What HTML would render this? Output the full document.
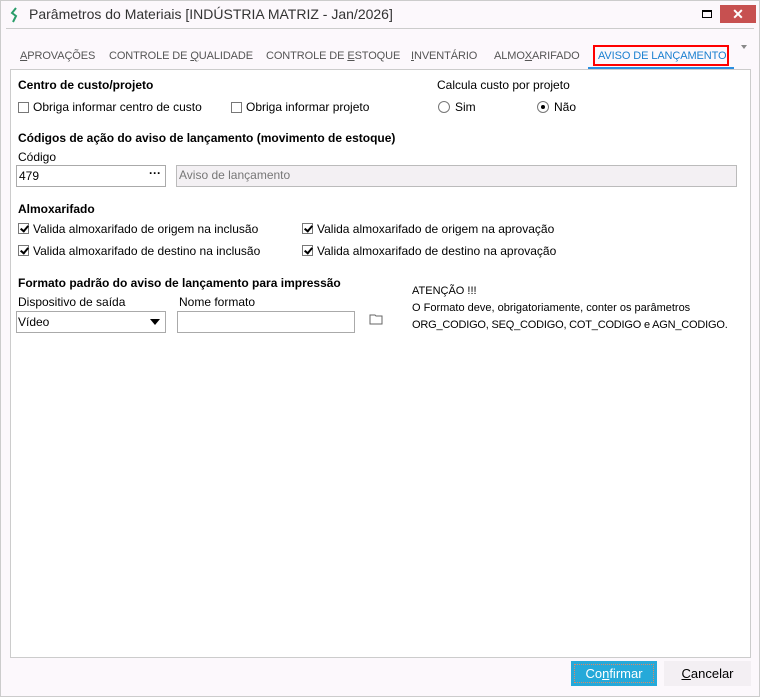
<!DOCTYPE html>
<html><head><meta charset="utf-8"><style>
*{margin:0;padding:0;box-sizing:border-box}
body{width:760px;height:697px;background:#fcf8fc;font-family:"Liberation Sans",sans-serif;font-size:12px;color:#000;position:relative;overflow:hidden}
.a{position:absolute;white-space:nowrap}
.b{font-weight:bold}
.cb{position:absolute;width:11px;height:11px;border:1px solid #777;background:#fff}
.cb.k::after{content:"";position:absolute;left:3px;top:0px;width:3px;height:6px;border:solid #000;border-width:0 2px 2px 0;transform:rotate(40deg)}
.rd{position:absolute;width:12px;height:12px;border:1px solid #777;border-radius:50%;background:#fff}
.tab{position:absolute;top:50px;color:#555;font-size:11px;letter-spacing:-0.1px}
.inp{position:absolute;border:1px solid #aaa;background:#fff;height:22px}
</style></head><body>
<div style="position:absolute;left:0;top:0;width:760px;height:697px;border:1px solid #ccc"></div>
<svg class="a" style="left:10px;top:7px" width="10" height="16" viewBox="0 0 10 16"><path d="M6 1 L2 6 L6 9 L3 15" fill="none" stroke="#2a9d6a" stroke-width="2"/></svg>
<div class="a" style="left:29px;top:6px;font-size:14px;color:#333">Parâmetros do Materiais [INDÚSTRIA MATRIZ - Jan/2026]</div>
<div class="a" style="left:702px;top:10px;width:10px;height:8px;border:1px solid #000;border-top-width:2px"></div>
<div class="a" style="left:720px;top:5px;width:36px;height:18px;background:#c75050;color:#fff;text-align:center;font-size:14px;line-height:18px;font-weight:bold">✕</div>
<div class="a" style="left:6px;top:28px;width:748px;height:1px;background:#ccc"></div>
<div class="tab" style="left:20px"><u>A</u>PROVAÇÕES</div>
<div class="tab" style="left:109px">CONTROLE DE <u>Q</u>UALIDADE</div>
<div class="tab" style="left:266px">CONTROLE DE <u>E</u>STOQUE</div>
<div class="tab" style="left:411px"><u>I</u>NVENTÁRIO</div>
<div class="tab" style="left:494px">ALMO<u>X</u>ARIFADO</div>
<div class="a" style="left:593px;top:45px;width:136px;height:21px;border:2px solid #f00"></div>
<div class="tab" style="left:598px;color:#1a7fd0">AVISO DE LANÇAMENTO</div>
<div class="a" style="left:588px;top:67px;width:146px;height:2px;background:#2b8fe0"></div>
<div class="a" style="left:741px;top:45px;width:0;height:0;border:3px solid transparent;border-top:4px solid #888"></div>
<div class="a" style="left:10px;top:69px;width:741px;height:589px;border:1px solid #ccc;background:#fff"></div>
<div class="a b" style="left:18px;top:78px">Centro de custo/projeto</div>
<div class="cb" style="left:18px;top:102px"></div><div class="a" style="left:33px;top:100px">Obriga informar centro de custo</div>
<div class="cb" style="left:231px;top:102px"></div><div class="a" style="left:246px;top:100px">Obriga informar projeto</div>
<div class="a" style="left:437px;top:78px">Calcula custo por projeto</div>
<div class="rd" style="left:438px;top:101px"></div><div class="a" style="left:455px;top:100px">Sim</div>
<div class="rd" style="left:537px;top:101px"><div style="position:absolute;left:3px;top:3px;width:4px;height:4px;border-radius:50%;background:#000"></div></div><div class="a" style="left:554px;top:100px">Não</div>
<div class="a b" style="left:18px;top:131px">Códigos de ação do aviso de lançamento (movimento de estoque)</div>
<div class="a" style="left:18px;top:150px">Código</div>
<div class="inp" style="left:16px;top:165px;width:150px"></div>
<div class="a" style="left:19px;top:169px">479</div>
<div class="a b" style="left:149px;top:166px">···</div>
<div class="inp" style="left:176px;top:165px;width:561px;background:#f3f0f3;border-color:#bbb"></div>
<div class="a" style="left:179px;top:168px;color:#777">Aviso de lançamento</div>
<div class="a b" style="left:18px;top:202px">Almoxarifado</div>
<div class="cb k" style="left:18px;top:223px"></div><div class="a" style="left:33px;top:222px">Valida almoxarifado de origem na inclusão</div>
<div class="cb k" style="left:302px;top:223px"></div><div class="a" style="left:317px;top:222px">Valida almoxarifado de origem na aprovação</div>
<div class="cb k" style="left:18px;top:245px"></div><div class="a" style="left:33px;top:244px">Valida almoxarifado de destino na inclusão</div>
<div class="cb k" style="left:302px;top:245px"></div><div class="a" style="left:317px;top:244px">Valida almoxarifado de destino na aprovação</div>
<div class="a b" style="left:18px;top:276px">Formato padrão do aviso de lançamento para impressão</div>
<div class="a" style="left:18px;top:295px">Dispositivo de saída</div>
<div class="a" style="left:179px;top:295px">Nome formato</div>
<div class="inp" style="left:16px;top:311px;width:150px"></div>
<div class="a" style="left:18px;top:315px">Vídeo</div>
<div class="a" style="left:150px;top:319px;border:5px solid transparent;border-top:6px solid #000;border-bottom:0"></div>
<div class="inp" style="left:177px;top:311px;width:178px"></div>
<svg class="a" style="left:369px;top:313px" width="16" height="13" viewBox="0 0 16 13"><path d="M1 2 H6 L7 3 H13 V11 H1 Z" fill="#fff" stroke="#666"/></svg>
<div class="a" style="left:412px;top:285px;font-size:11px">ATENÇÃO !!!</div>
<div class="a" style="left:412px;top:302px;font-size:11px">O Formato deve, obrigatoriamente, conter os parâmetros</div>
<div class="a" style="left:412px;top:319px;font-size:11px;letter-spacing:-0.2px">ORG_CODIGO, SEQ_CODIGO, COT_CODIGO e AGN_CODIGO.</div>
<div class="a" style="left:571px;top:661px;width:86px;height:25px;background:#25a9d9;color:#fff;text-align:center;line-height:25px;font-size:13px"><div style="position:absolute;left:3px;top:3px;right:3px;bottom:3px;border:1px dotted #d86"></div>Co<u>n</u>firmar</div>
<div class="a" style="left:664px;top:661px;width:87px;height:25px;background:#f3eff3;text-align:center;line-height:25px;font-size:13px"><u>C</u>ancelar</div>
</body></html>
